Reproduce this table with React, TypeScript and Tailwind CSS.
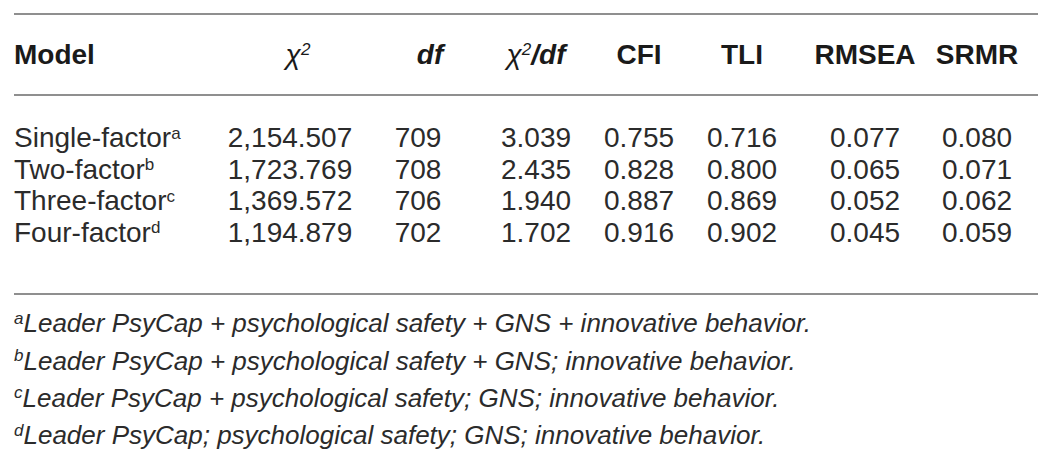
import React from "react";

const rows = [
  { model: "Single-factor", sup: "a", chi: "2,154.507", df: "709", ratio: "3.039", cfi: "0.755", tli: "0.716", rmsea: "0.077", srmr: "0.080" },
  { model: "Two-factor", sup: "b", chi: "1,723.769", df: "708", ratio: "2.435", cfi: "0.828", tli: "0.800", rmsea: "0.065", srmr: "0.071" },
  { model: "Three-factor", sup: "c", chi: "1,369.572", df: "706", ratio: "1.940", cfi: "0.887", tli: "0.869", rmsea: "0.052", srmr: "0.062" },
  { model: "Four-factor", sup: "d", chi: "1,194.879", df: "702", ratio: "1.702", cfi: "0.916", tli: "0.902", rmsea: "0.045", srmr: "0.059" },
];

const notes = [
  { sup: "a", text: "Leader PsyCap + psychological safety + GNS + innovative behavior." },
  { sup: "b", text: "Leader PsyCap + psychological safety + GNS; innovative behavior." },
  { sup: "c", text: "Leader PsyCap + psychological safety; GNS; innovative behavior." },
  { sup: "d", text: "Leader PsyCap; psychological safety; GNS; innovative behavior." },
];

const cols = "grid grid-cols-[212px_128px_128px_108px_98px_108px_138px_86px]";

const App = () => {
  return (
    <div className="w-[1052px] h-[464px] bg-white pt-[13px] px-[14px] font-['Liberation_Sans',Arial,sans-serif] text-[#2b2b2b]">
      <div className="w-[1024px]">
        <div className="h-[2px] bg-[#8f8f8f]" />
        <div className={`${cols} h-[79px] items-center text-[28px] font-bold text-[#1a1a1a]`}>
          <div>Model</div>
          <div className="text-center pl-[16px] font-normal italic">
            χ<sup className="text-[17px]">2</sup>
          </div>
          <div className="text-center pl-[24px] italic">df</div>
          <div className="text-center italic">
            <span className="font-normal">χ<sup className="text-[17px]">2</sup></span>/df
          </div>
          <div className="text-center">CFI</div>
          <div className="text-center">TLI</div>
          <div className="text-center">RMSEA</div>
          <div className="text-center">SRMR</div>
        </div>
        <div className="h-[2px] bg-[#8f8f8f]" />
        <div className="pt-[26px] pb-[45px] text-[28px] leading-[31.6px]">
          {rows.map((r) => (
            <div key={r.model} className={cols}>
              <div>
                {r.model}
                <sup className="text-[17px]">{r.sup}</sup>
              </div>
              <div className="text-center">{r.chi}</div>
              <div className="text-center">{r.df}</div>
              <div className="text-center">{r.ratio}</div>
              <div className="text-center">{r.cfi}</div>
              <div className="text-center">{r.tli}</div>
              <div className="text-center">{r.rmsea}</div>
              <div className="text-center">{r.srmr}</div>
            </div>
          ))}
        </div>
        <div className="h-[2px] bg-[#8f8f8f]" />
        <div className="pt-[10px] text-[26px] leading-[37.3px] italic">
          {notes.map((n) => (
            <div key={n.sup}>
              <sup className="text-[17px]">{n.sup}</sup>
              {n.text}
            </div>
          ))}
        </div>
      </div>
    </div>
  );
};

export default App;
